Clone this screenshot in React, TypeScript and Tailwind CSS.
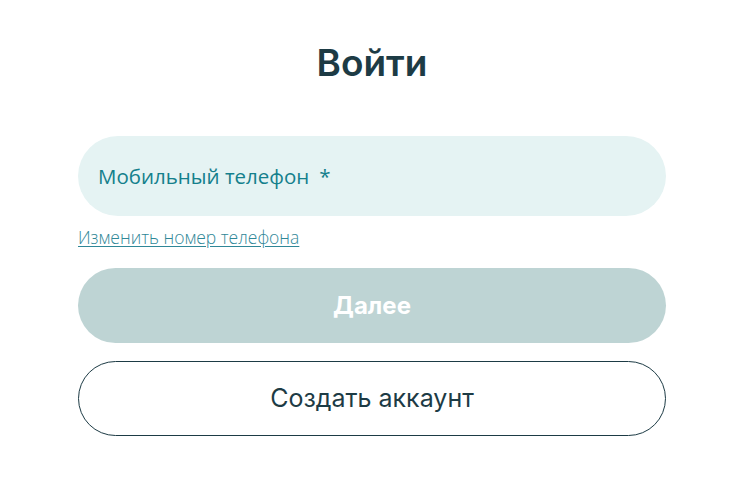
import React from 'react';

export default function App() {
  return (
    <div className="min-h-screen bg-white pt-[40px]">
      <div className="ml-[78px] flex w-[588px] flex-col">
        <h1 className="text-center font-['Inter',sans-serif] text-[37px] font-semibold leading-[46px] text-[#1d3b45]">
          Войти
        </h1>

        <div className="mt-[50px] flex h-[80px] items-center rounded-full bg-[#e5f3f3] px-[20px]">
          <span className="font-['Open_Sans',sans-serif] text-[20.5px] text-[#14808c]">
            Мобильный телефон<span className="ml-[10px]">*</span>
          </span>
        </div>

        <a
          href="#"
          className="mt-[9px] self-start font-['Open_Sans',sans-serif] text-[17.5px] font-light leading-[24px] text-[#2f8797] underline underline-offset-2"
        >
          Изменить номер телефона
        </a>

        <button className="mt-[19px] h-[75px] rounded-full bg-[#bed4d4] font-['Inter',sans-serif] text-[24px] font-bold text-white">
          Далее
        </button>

        <button className="mt-[18px] h-[75px] rounded-full border border-[#1d3b45] bg-white font-['Inter',sans-serif] text-[25px] font-normal text-[#1d3b45]">
          Создать аккаунт
        </button>
      </div>
    </div>
  );
}
